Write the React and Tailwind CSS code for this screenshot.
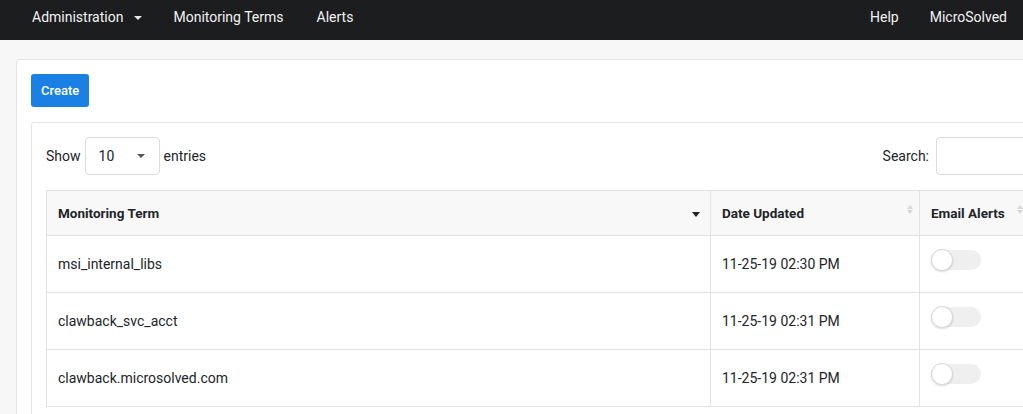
const rows = [
  { term: "msi_internal_libs", date: "11-25-19 02:30 PM" },
  { term: "clawback_svc_acct", date: "11-25-19 02:31 PM" },
  { term: "clawback.microsolved.com", date: "11-25-19 02:31 PM" },
];

const SortIcon = ({ active }) =>
  active ? (
    <span className="absolute right-[10px] top-[21px] w-0 h-0 border-l-[4px] border-r-[4px] border-t-[5px] border-l-transparent border-r-transparent border-t-[#222]" />
  ) : (
    <span className="absolute right-[6px] top-[14px] flex flex-col gap-[1px]">
      <span className="w-0 h-0 border-l-[3px] border-r-[3px] border-b-[4px] border-l-transparent border-r-transparent border-b-[#d6d6d6]" />
      <span className="w-0 h-0 border-l-[3px] border-r-[3px] border-t-[4px] border-l-transparent border-r-transparent border-t-[#d6d6d6]" />
    </span>
  );

const Toggle = () => (
  <div className="relative w-[50px] h-[20px] rounded-full bg-[#efefef]">
    <div className="absolute left-0 top-[-1px] w-[22px] h-[22px] rounded-full bg-white border border-[#d8d8d8] shadow-[0_1px_2px_rgba(0,0,0,0.15)]" />
  </div>
);

export default function App() {
  return (
    <div className="min-h-screen bg-[#f7f7f7] overflow-hidden font-['Roboto',sans-serif] text-[#212529]">
      {/* navbar */}
      <nav className="h-10 bg-[#1c1d1f] flex items-start pt-[7px] px-8 text-[14px] leading-5 text-[#f2f2f2]">
        <div className="flex items-center">
          <span>Administration</span>
          <span className="ml-[11px] mt-[1px] w-0 h-0 border-l-[4px] border-r-[4px] border-t-[4px] border-l-transparent border-r-transparent border-t-[#e8e8e8]" />
        </div>
        <span className="ml-[31px]">Monitoring Terms</span>
        <span className="ml-[33px]">Alerts</span>
        <div className="ml-auto flex gap-[31px] mr-[-16px]">
          <span>Help</span>
          <span>MicroSolved</span>
        </div>
      </nav>

      {/* content */}
      <div className="pl-4 pt-[19px]">
        <div className="w-[1060px] bg-white border border-[#e3e3e3] rounded-[3px] p-[14px]">
          <button className="h-[33px] px-[10px] bg-[#1a80e3] rounded-[3px] text-white text-[13px] font-medium">
            Create
          </button>

          <div className="mt-[15px] border border-[#e3e3e3] rounded-[3px] p-[14px]">
            <div className="flex items-center text-[14px]">
              <span>Show</span>
              <div className="ml-[4px] w-[75px] h-[38px] border border-[#dcdcdc] rounded-[4px] flex items-center pl-[13px] pr-[14px] justify-between text-[14px]">
                <span>10</span>
                <span className="w-0 h-0 border-l-[4px] border-r-[4px] border-t-[4px] border-l-transparent border-r-transparent border-t-[#555]" />
              </div>
              <span className="ml-[4px]">entries</span>
              <div className="ml-auto flex items-center">
                <span>Search:</span>
                <div className="ml-[7px] w-[110px] h-[38px] border border-[#dcdcdc] rounded-l-[4px] border-r-0" />
              </div>
            </div>

            <table className="mt-[15px] w-full border-collapse border border-[#e2e2e2] text-[14px]">
              <thead>
                <tr className="bg-[#f8f8f8] h-[45px] font-bold text-[13.5px]">
                  <th className="relative text-left pl-[11px] border border-[#e2e2e2] w-[664px]">
                    Monitoring Term
                    <SortIcon active />
                  </th>
                  <th className="relative text-left pl-[11px] border border-[#e2e2e2] w-[209px]">
                    Date Updated
                    <SortIcon />
                  </th>
                  <th className="relative text-left pl-[11px] border border-[#e2e2e2]">
                    Email Alerts
                    <span className="absolute left-[97px] top-[14px] flex flex-col gap-[1px]">
                      <span className="w-0 h-0 border-l-[3px] border-r-[3px] border-b-[4px] border-l-transparent border-r-transparent border-b-[#d6d6d6]" />
                      <span className="w-0 h-0 border-l-[3px] border-r-[3px] border-t-[4px] border-l-transparent border-r-transparent border-t-[#d6d6d6]" />
                    </span>
                  </th>
                </tr>
              </thead>
              <tbody>
                {rows.map((r, i) => (
                  <tr key={i} className="h-[57px]">
                    <td className="pl-[11px] border border-[#e2e2e2]">{r.term}</td>
                    <td className="pl-[11px] border border-[#e2e2e2]">{r.date}</td>
                    <td className="pl-[11px] border border-[#e2e2e2] align-top pt-[14px]">
                      <Toggle />
                    </td>
                  </tr>
                ))}
              </tbody>
            </table>
          </div>
        </div>
      </div>
    </div>
  );
}
